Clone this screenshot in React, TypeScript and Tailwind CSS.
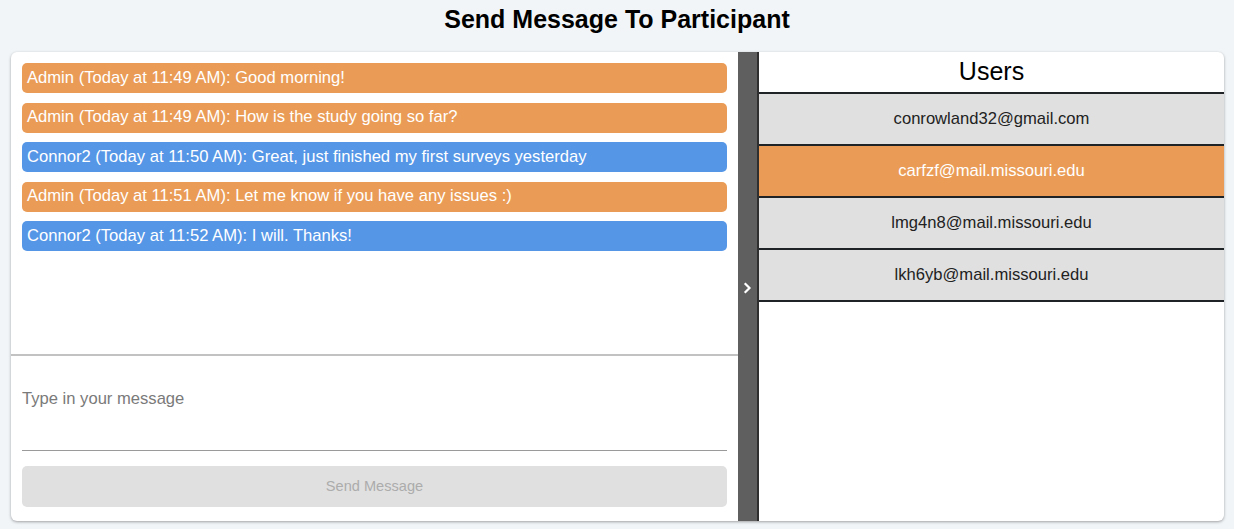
import React from "react";

type Msg = { from: "admin" | "user"; text: string };

const messages: Msg[] = [
  { from: "admin", text: "Admin (Today at 11:49 AM): Good morning!" },
  { from: "admin", text: "Admin (Today at 11:49 AM): How is the study going so far?" },
  { from: "user", text: "Connor2 (Today at 11:50 AM): Great, just finished my first surveys yesterday" },
  { from: "admin", text: "Admin (Today at 11:51 AM): Let me know if you have any issues :)" },
  { from: "user", text: "Connor2 (Today at 11:52 AM): I will. Thanks!" },
];

const users = [
  "conrowland32@gmail.com",
  "carfzf@mail.missouri.edu",
  "lmg4n8@mail.missouri.edu",
  "lkh6yb@mail.missouri.edu",
];

export default function App() {
  const selected = 1;
  return (
    <div className="h-[529px] bg-[#f2f5f8] font-['Liberation_Sans',Arial,sans-serif] text-black flex flex-col">
      <h1 className="h-[52px] pt-[4px] text-center text-[25px] font-bold leading-[30px]">
        Send Message To Participant
      </h1>
      <div className="mx-[11px] mr-[10px] h-[469px] bg-white rounded-[6px] shadow-[0_1px_3px_rgba(0,0,0,0.35)] flex overflow-hidden">
        {/* conversation column */}
        <div className="w-[727px] flex flex-col">
          <div className="h-[304px] border-b-2 border-[#c2c2c2] px-[11px] pt-[11px] flex flex-col gap-[9.5px]">
            {messages.map((m, i) => (
              <div
                key={i}
                className={`h-[30px] shrink-0 rounded-[5px] px-[5px] flex items-center text-white text-[16.6px] leading-none ${
                  m.from === "admin" ? "bg-[#ea9c56]" : "bg-[#5596e7]"
                }`}
              >
                {m.text}
              </div>
            ))}
          </div>
          <div className="flex-1 px-[11px] flex flex-col">
            <div className="h-[95px] border-b border-[#9a9a9a] pt-[31px]">
              <input
                className="w-full outline-none text-[16.6px] text-[#333] placeholder:text-[#7a7a7a] bg-transparent"
                placeholder="Type in your message"
              />
            </div>
            <button
              disabled
              className="mt-[15px] h-[41px] w-full rounded-[5px] bg-[#e0e0e0] text-[#acacac] text-[14.6px]"
            >
              Send Message
            </button>
          </div>
        </div>
        {/* collapse handle */}
        <div className="w-[21px] bg-[#5f5f5f] border-r-2 border-[#2f2f2f] flex items-center justify-center pt-[2px]">
          <svg width="9" height="12" viewBox="0 0 9 12" fill="none">
            <path d="M2.5 2 L6.5 6 L2.5 10" stroke="white" strokeWidth="2.2" strokeLinecap="square" />
          </svg>
        </div>
        {/* users column */}
        <div className="flex-1 flex flex-col">
          <div className="h-[42px] flex items-center justify-center text-[25px] border-b-2 border-[#1f2326]">
            Users
          </div>
          {users.map((u, i) => (
            <div
              key={u}
              className={`h-[52px] flex items-center justify-center text-[16.6px] border-b-2 border-[#1f2326] ${
                i === selected ? "bg-[#ea9c56] text-white" : "bg-[#e0e0e0] text-[#222]"
              }`}
            >
              {u}
            </div>
          ))}
        </div>
      </div>
    </div>
  );
}
